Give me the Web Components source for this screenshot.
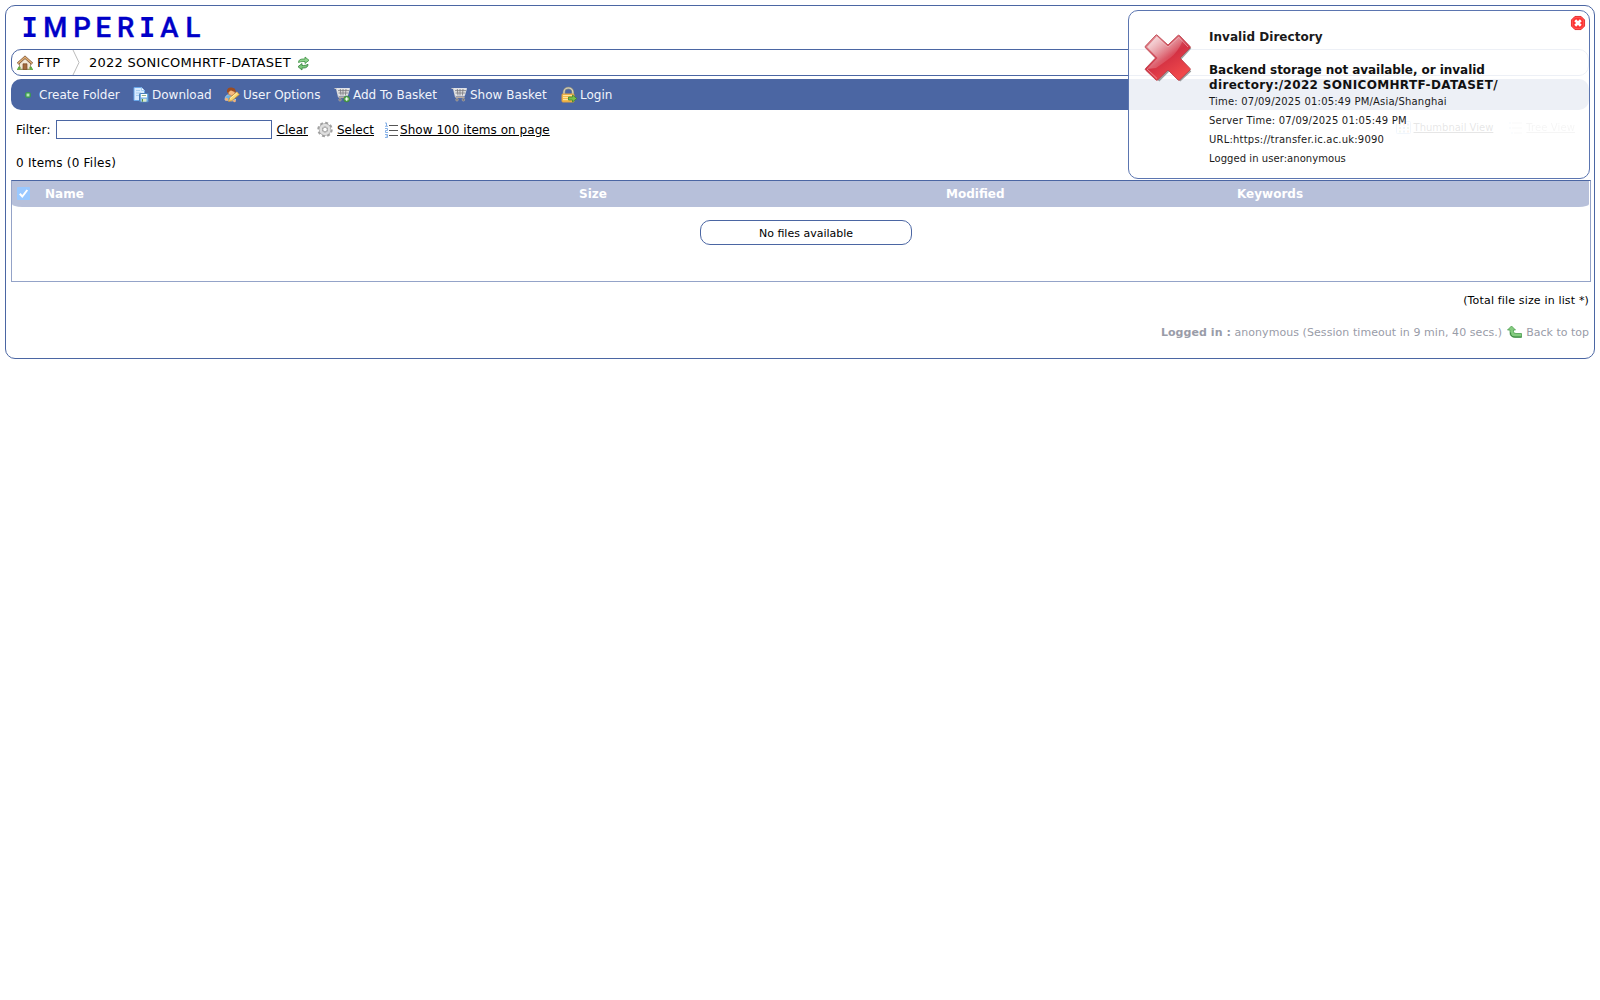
<!DOCTYPE html>
<html lang="en">
<head>
<meta charset="utf-8">
<title>FTP - 2022 SONICOMHRTF-DATASET</title>
<style>
  body {
    margin: 0;
    padding: 5px;
    background: #fff;
    color: #000;
    font: 12px/15px "DejaVu Sans", Verdana, sans-serif;
  }
</style>
</head>
<body>
<ftp-page>
  <brand-logo slot="logo"></brand-logo>
  <bread-crumbs slot="crumbs"></bread-crumbs>
  <tool-bar slot="toolbar">
    <tool-link icon="add" style="width:113px">Create Folder</tool-link>
    <tool-link icon="download" style="width:91px">Download</tool-link>
    <tool-link icon="user" style="width:110px">User Options</tool-link>
    <tool-link icon="cart-add" style="width:117px">Add To Basket</tool-link>
    <tool-link icon="cart" style="width:110px">Show Basket</tool-link>
    <tool-link icon="lock">Login</tool-link>
  </tool-bar>
  <filter-row slot="filter"></filter-row>
  <file-list slot="list">No files available</file-list>
  <page-footer slot="footer"></page-footer>
</ftp-page>
<error-toast>
  <span slot="title">Invalid Directory</span>
  <span slot="message">Backend storage not available, or invalid <span style="letter-spacing:.34px">directory:/2022 SONICOMHRTF-DATASET/</span></span>
  <div>Time: 07/09/2025 01:05:49 PM/Asia/Shanghai</div>
  <div>Server Time: 07/09/2025 01:05:49 PM</div>
  <div>URL:https://transfer.ic.ac.uk:9090</div>
  <div style="letter-spacing:.06px">Logged in user:anonymous</div>
</error-toast>

<script>
const cart = `
  <path d="M.5 1.5h2l2 8.5h9" fill="none" stroke="#c9c9c9" stroke-width="1.2"/>
  <path d="M3 1.500h12.500L13.500 8.500H4.700z" fill="#e2e2e2" stroke="#f3f3f3" stroke-width=".8"/>
  <path d="M4 3.600h11M4.500 6h10M6.300 2l.7 6.500M9 2v6.500M12 2l-.6 6.500" stroke="#77777d" stroke-width=".8"/>
  <path d="M5 10.400h8.500" stroke="#b9aba0" stroke-width="1.400"/>
  <circle cx="6" cy="12.800" r="1.300" fill="#777" stroke="#c8b8aa" stroke-width=".5"/>
  <circle cx="12.4" cy="12.800" r="1.300" fill="#777" stroke="#c8b8aa" stroke-width=".5"/>`;

const icons = {
  home: `
    <path d="M0 13.500h16V15H0z" fill="#69b34c"/>
    <path d="M2.5 7.500 8 3l5.500 4.500v6.700h-11z" fill="#f3e9d6" stroke="#98795c" stroke-width=".8"/>
    <path d="M6 8.800h4v5.700H6z" fill="#a36b3c" stroke="#7b4a26" stroke-width=".7"/>
    <path d="M.8 8.700 8 2.300 15.200 8.700" fill="none" stroke="#755037" stroke-width="2.6"/>
    <path d="M1 8.500 8 2.300l7 6.200" fill="none" stroke="#e0ad72" stroke-width="1.500"/>
    <circle cx="2.3" cy="13" r="1.400" fill="#61a943"/><circle cx="13.7" cy="13" r="1.400" fill="#61a943"/>`,
  refresh: `
    <path d="M3.500 7.500Q3.500 4 8 4h2V2l4 3.300-4 3.200V6.500H8Q5.500 6.500 3.500 7.500z" fill="#8ed28c" stroke="#3c8f42" stroke-width=".8"/>
    <path d="M13 9.300q0 3.700-4.500 3.700H7v2l-4-3.300 4-3.200v2h1.500Q11 10.500 13 9.300z" fill="#7cc67b" stroke="#2f7d38" stroke-width=".8"/>`,
  add: `
    <rect x="5.500" y="5.500" width="5" height="5" rx="1.500" fill="#55a86b" stroke="#3c9558"/>
    <rect x="6.700" y="6.700" width="2.600" height="2.600" fill="#b5e8b0"/>`,
  download: `
    <path d="M1 .5h7.500l3 3v10H1z" fill="#d7eaff" stroke="#6aa7ea"/>
    <path d="M8.500.5v3h3" fill="#fff" stroke="#8ec1f2" stroke-width=".8"/>
    <path d="M3 3.500h4M3 6h5M3 8.500h3" stroke="#a6ceef"/>
    <rect x="6.500" y="6.500" width="9" height="8.500" rx=".8" fill="#6faae5" stroke="#4c7fba"/>
    <rect x="8" y="7" width="6" height="3.500" fill="#fff"/>
    <rect x="8.500" y="11.700" width="5" height="3" fill="#dceccb"/>
    <path d="M8.800 8.500h4.300" stroke="#8db28a"/><path d="M9.500 12v2.700" stroke="#558848"/>`,
  user: `
    <path d="M1 13c0-4 2-6 6-5l5 5-4 1z" fill="#6eb2e3" stroke="#dce9f2" stroke-width=".6"/>
    <circle cx="7.500" cy="5" r="3.500" fill="#f6ba80" stroke="#b46a35" stroke-width=".6"/>
    <path d="M3 5C2.500 0 8-.5 11 2l1 3c-3 0-4-1.500-5-1.500S5 5 4 6z" fill="#9b4c22"/>
    <path d="m4.500 14.500 1-3.500L12.800 5l2.500 2.500-7.500 6.200z" fill="#f6d774" stroke="#ce8d31" stroke-width=".8"/>
    <path d="m6 11.500 7.300-6" stroke="#fff1b3"/>
    <circle cx="2.500" cy="12.300" r="1.500" fill="#f4b176"/><circle cx="10.500" cy="14" r="1.300" fill="#f4b176"/>`,
  cart,
  "cart-add": `${cart}
    <circle cx="12.700" cy="12" r="3" fill="#51a94d" stroke="#3b7e38" stroke-width=".6"/>
    <path d="M12.700 10.200v3.600m-1.800-1.800h3.600" stroke="#fff" stroke-width="1.200"/>`,
  lock: `
    <path d="M3 8V5a4.400 4 0 0 1 8.800 0v3" fill="none" stroke="#948f78" stroke-width="2.500"/>
    <path d="M3 8V5a4.400 4 0 0 1 8.800 0v3" fill="none" stroke="#d8d6c6" stroke-width="1.200"/>
    <rect x="1" y="7" width="12" height="8" rx=".8" fill="#f6bc4b" stroke="#dda044"/>
    <path d="M2 8.500h10M2 10.500h7M2 12.500h7" stroke="#ffe69d"/>
    <path d="M7.500 10h4V8l4.300 3.500-4.300 3.500v-2h-4z" fill="#79bf4c" stroke="#3f842e" stroke-width=".8"/>`,
  gear: `
    <circle cx="8" cy="7.500" r="6.600" fill="none" stroke="#a2a2a2" stroke-width="2.200" stroke-dasharray="2.900 2.284"/>
    <circle cx="8" cy="7.500" r="4.300" fill="none" stroke="#9a9a9a" stroke-width="3.800"/>
    <circle cx="8" cy="7.500" r="4.300" fill="none" stroke="#dedede" stroke-width="2.800"/>
    <circle cx="8" cy="7.500" r="2.200" fill="#fff" stroke="#909090" stroke-width=".7"/>`,
  numbered: `
    <path d="M1 1h1.500v3M1 4.300h3M1 6.500h2.500v2H1.500v2H4M1 12.500h2.500v3H1m.8-1.500h1.700" fill="none" stroke="#79a9e5" stroke-width=".9"/>
    <path d="M5 3.500h9M5 8.500h9M5 13.500h9" stroke="#555"/>`,
  thumbs: `
    <rect x=".5" y="1.500" width="14" height="12" rx="1" fill="#fff" stroke="#6fa2de"/>
    <path d="M3 4.500h2M11 8h2M3 11.500h2" stroke="#7bb661" stroke-width="2"/>
    <path d="M7 4.500h2M3 8h2M11 11.500h2" stroke="#e08a4a" stroke-width="2"/>
    <path d="M11 4.500h2M7 8h2M7 11.500h2" stroke="#5b8dd6" stroke-width="2"/>`,
  tree: `
    <path d="M1 3h2M1 8h2M3 13h2" stroke="#6fa2de" stroke-width="2"/>
    <path d="M4 3h10M4 8h10M6 13h8" stroke="#555"/>`,
  top: `
    <path d="M.5 6 4.500 2 8.500 6H6.500v1.800Q6.500 9.500 9 9.500h5.500v3.800H8Q3 13.300 3 8.500V6z" fill="#84cc7f" stroke="#4e9e51" stroke-width=".8"/>
    <path d="M3.500 8.500q0 4.500 4.500 4.500h6.500" fill="none" stroke="#398540"/>`,
  close: `
    <path d="M4.500.5h7l4 4v7l-4 4h-7l-4-4v-7z" fill="#f33" stroke="#e51a1f"/>
    <path d="M4.800 1.500h6.400l3.300 3.300v6.400l-3.300 3.300H4.800l-3.300-3.300V4.800z" fill="none" stroke="#ff8277" stroke-width=".6"/>
    <path d="m4.800 4.800 6.400 6.400m0-6.400-6.400 6.400" stroke="#fff" stroke-width="3"/>`,
  error: `
    <defs>
      <linearGradient id="red" x1="0" y1="0" x2=".6" y2="1">
        <stop offset="0" stop-color="#e8a5aa"/><stop offset=".4" stop-color="#d65361"/>
        <stop offset=".58" stop-color="#d33143"/><stop offset="1" stop-color="#f0494b"/>
      </linearGradient>
      <linearGradient id="shine" x1="0" y1="0" x2="1" y2="1">
        <stop offset="0" stop-color="#fff" stop-opacity=".8"/><stop offset=".7" stop-color="#fff" stop-opacity=".08"/>
      </linearGradient>
      <filter id="soft"><feGaussianBlur stdDeviation=".7"/></filter>
    </defs>
    <path d="M13 2 24 12 34 2 46 13 36 24 46 36 35 46 24 36 14 46 2 35 12 24 2 13z" transform="translate(1.300 1.500)" fill="#777" opacity=".7" filter="url(#soft)"/>
    <path d="M13 1Q12.500.5 12 1L1.500 12q-.8.9 0 1.800L11.500 24 1.500 34.500q-.6.800 0 1.500L12 46q.8.600 1.600 0L24 36l10 10q.8.600 1.600 0L46 36q.8-.8 0-1.600L36 24l10-10q.8-.8 0-1.600L35.500 1.500q-.8-.7-1.600 0L24 11z" fill="url(#red)" stroke="#b83b45" stroke-width=".8"/>
    <path d="M12.600 2.500 24 13 34.600 3l4 4Q34 18 26 24T12 34l-9 1 10.500-11L3 13z" fill="url(#shine)"/>
    <path d="M12.700 2.700 24 13 34.700 3 44 13M3 35l10 9.500" fill="none" stroke="#fff" stroke-opacity=".45" stroke-width=".9"/>`,
};

class AppIcon extends HTMLElement {
  constructor() {
    super();
    this.attachShadow({ mode: "open" });
  }

  connectedCallback() {
    const name = this.getAttribute("name");
    const box = name === "error" ? 48 : 16;
    this.shadowRoot.innerHTML = `
      <style>
        :host { display: block; flex: none; width: 16px; height: 16px; }
        svg { display: block; width: 100%; height: 100%; overflow: visible; }
      </style>
      <svg viewBox="0 0 ${box} ${box}">${icons[name]}</svg>
    `;
  }
}

// Registers an element whose shadow root only holds static markup
function define(name, html) {
  customElements.define(name, class extends HTMLElement {
    constructor() {
      super();
      this.attachShadow({ mode: "open" }).innerHTML = html;
    }
  });
}

customElements.define("app-icon", AppIcon);

define("ftp-page", `
  <style>
    :host {
      display: flex;
      flex-direction: column;
      box-sizing: border-box;
      height: 354px;
      padding: 0 3px 0 5px;
      border: 1px solid #4b66a3;
      border-radius: 10px;
    }
  </style>
  <slot name="logo"></slot>
  <slot name="crumbs"></slot>
  <slot name="toolbar"></slot>
  <slot name="filter"></slot>
  <slot name="list"></slot>
  <slot name="footer"></slot>
`);

define("brand-logo", `
  <style>
    :host { display: block; height: 43px; }
    svg { display: block; }
    text { font: 500 27.500px "Roboto", sans-serif; fill: #0000c8; stroke: #0000c8; stroke-width: .4px; }
    .slab { font: 700 27px "DejaVu Sans Mono", monospace; stroke: none; }
  </style>
  <svg width="200" height="43">
    <text y="31" x="10.500 32.300 62.200 84.400 106 128 149.300 174.400"><tspan class="slab">I</tspan>MPER<tspan class="slab">I</tspan>AL</text>
  </svg>
`);

define("bread-crumbs", `
  <style>
    :host {
      display: flex;
      align-items: center;
      box-sizing: border-box;
      height: 27px;
      width: 1578px;
      padding-left: 5px;
      border: 1px solid #4b66a3;
      border-radius: 10px;
      font-size: 13px;
    }
    .home { margin-right: 4px; }
    .sep { width: 8px; height: 25px; margin: 0 9px 0 12px; }
    .path { letter-spacing: .26px; }
    .refresh { margin-left: 4px; }
  </style>
  <app-icon class="home" name="home"></app-icon>
  <span>FTP</span>
  <svg class="sep" viewBox="0 0 8 25"><path d="M1 0l6 12.500L1 25" fill="none" stroke="#bbb"/></svg>
  <span class="path">2022 SONICOMHRTF-DATASET</span>
  <app-icon class="refresh" name="refresh"></app-icon>
`);

define("tool-bar", `
  <style>
    :host {
      display: flex;
      align-items: center;
      box-sizing: border-box;
      width: 1578px;
      height: 31px;
      margin-top: 3px;
      padding: 1px 0 0 9px;
      border-radius: 10px;
      background: #4b66a3;
      color: #fff;
    }
  </style>
  <slot></slot>
`);

class ToolLink extends HTMLElement {
  connectedCallback() {
    const icon = this.getAttribute("icon");
    this.attachShadow({ mode: "open" }).innerHTML = `
      <style>
        :host { display: flex; align-items: center; gap: 3px; white-space: nowrap; color: #f1f4fb; }
      </style>
      <app-icon name="${icon}"></app-icon>
      <slot></slot>
    `;
  }
}
customElements.define("tool-link", ToolLink);

define("filter-row", `
  <style>
    :host { display: block; height: 70px; }
    .row { display: flex; align-items: center; height: 39px; padding: 0 15px 0 5px; }
    .row > span, .row > a { padding-top: 1px; }
    .label { letter-spacing: .15px; }
    input {
      box-sizing: border-box;
      width: 216px;
      height: 19px;
      margin: 0 5px 0 5px;
      padding: 1px 2px;
      border: 1px solid #4b66a3;
      outline: 0;
    }
    a { color: inherit; text-decoration: underline; text-underline-offset: 1px; }
    .gear { margin: 0 4px 0 9px; }
    .numbered { margin: 0 0 0 10px; }
    .long { letter-spacing: .04px; }
    .views { display: flex; align-items: center; margin: -4px 0 0 auto; font-size: 10px; }
    .thumbs { margin-right: 2px; }
    .tree { display: flex; gap: 2px; margin: 0 1px 0 15px; opacity: .4; letter-spacing: .1px; }
    .count { margin-top: 7px; padding-left: 5px; letter-spacing: .24px; }
  </style>
  <div class="row">
    <span class="label">Filter:</span>
    <input type="text" aria-label="Filter">
    <a>Clear</a>
    <app-icon class="gear" name="gear"></app-icon>
    <a>Select</a>
    <app-icon class="numbered" name="numbered"></app-icon>
    <a class="long">Show 100 items on page</a>
    <div class="views">
      <app-icon class="thumbs" name="thumbs"></app-icon>
      <a>Thumbnail View</a>
      <span class="tree"><app-icon name="tree"></app-icon><a>Tree View</a></span>
    </div>
  </div>
  <div class="count">0 Items (0 Files)</div>
`);

define("file-list", `
  <style>
    :host {
      display: block;
      box-sizing: border-box;
      width: 1580px;
      height: 102px;
      border: 1px solid #94a3c8;
      border-top-color: #4b66a3;
    }
    .head {
      display: grid;
      grid-template-columns: 33px 534px 367px 291px 1fr;
      align-items: center;
      width: 1577px;
      height: 26px;
      border-radius: 0 0 10px 10px / 0 0 3px 3px;
      background: #b7c0da;
      color: #fff;
      font-weight: bold;
    }
    .check { width: 13px; height: 13px; margin: 0 0 1px 5px; border-radius: 1px; background: #99c8ff; }
    .check svg { display: block; }
    .empty {
      box-sizing: border-box;
      width: 212px;
      height: 25px;
      margin: 13px 0 0 688px;
      border: 1px solid #4b66a3;
      border-radius: 10px;
      font-size: 11px;
      line-height: 25px;
      text-align: center;
    }
  </style>
  <div class="head">
    <div class="check"><svg width="13" height="13"><path d="M2.800 6.800 5.300 9.500 10.300 3" fill="none" stroke="#fff" stroke-width="2"/></svg></div>
    <span>Name</span><span>Size</span><span>Modified</span><span>Keywords</span>
  </div>
  <div class="empty"><slot></slot></div>
`);

define("page-footer", `
  <style>
    :host { display: block; padding-right: 2px; font-size: 11px; }
    .total { margin-top: 11px; text-align: right; letter-spacing: .16px; }
    .session { display: flex; justify-content: flex-end; align-items: center; margin-top: 16px; color: #999ca8; }
    .who { letter-spacing: .06px; }
    app-icon { margin: 0 3px 0 5px; }
  </style>
  <div class="total">(Total file size in list *)</div>
  <div class="session">
    <span class="who"><b>Logged in :</b> anonymous (Session timeout in 9 min, 40 secs.)</span>
    <app-icon name="top"></app-icon>
    <span>Back to top</span>
  </div>
`);

define("error-toast", `
  <style>
    :host {
      position: absolute;
      top: 10px;
      left: 1128px;
      display: flex;
      box-sizing: border-box;
      width: 462px;
      height: 169px;
      border: 1px solid #5b75b0;
      border-radius: 10px;
      background: rgba(255, 255, 255, .9);
      color: #1a1a1a;
    }
    .picture { width: 48px; height: 48px; margin: 23px 0 0 15px; }
    .body { width: 310px; margin: 19px 0 0 17px; font-size: 10px; line-height: 19px; letter-spacing: .21px; }
    .title, .message { display: block; font: bold 12px/15px "DejaVu Sans", sans-serif; letter-spacing: .04px; }
    .message { margin-top: 18px; margin-bottom: -1px; color: #111; letter-spacing: -.05px; }
    .close { position: absolute; top: 5px; right: 4px; width: 14px; height: 14px; }
  </style>
  <app-icon class="picture" name="error"></app-icon>
  <div class="body">
    <slot class="title" name="title"></slot>
    <slot class="message" name="message"></slot>
    <slot></slot>
  </div>
  <app-icon class="close" name="close"></app-icon>
`);
</script>
</body>
</html>
